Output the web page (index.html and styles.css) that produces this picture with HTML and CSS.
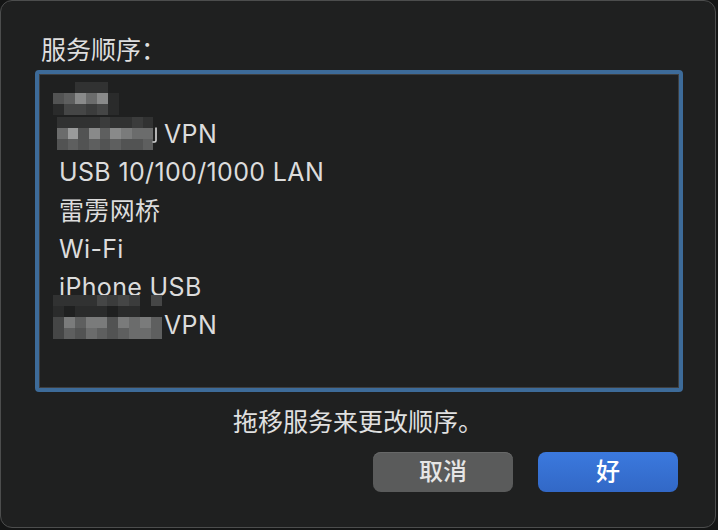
FILE: index.html
```html
<!DOCTYPE html>
<html lang="zh">
<head>
<meta charset="utf-8">
<link rel="stylesheet" href="styles.css">
</head>
<body>
<div class="window">
  <div class="title">服务顺序：</div>
  <div class="list">
    <div class="item"><div class="mosaic mA">
        <span></span><span></span><span class="g2"></span><span class="g2"></span><span class="g2"></span><span></span>
        <span class="g5"></span><span class="g6"></span><span class="g9"></span><span class="g7"></span><span class="g9"></span><span class="g1"></span>
        <span class="g1"></span><span class="g4"></span><span class="g4"></span><span class="g3"></span><span class="g4"></span><span class="g1"></span>
      </div><span class="tail">&nbsp;</span></div>
    <div class="item"><div class="mosaic mB">
        <span class="g2"></span><span class="g2"></span><span class="g2"></span><span class="g2"></span><span class="g3"></span><span class="g2"></span><span class="g2"></span><span class="g3"></span><span class="g2"></span>
        <span class="g7"></span><span class="ga"></span><span class="g5"></span><span class="g9"></span><span class="g6"></span><span class="g9"></span><span class="g8"></span><span class="g7"></span><span class="g7"></span>
        <span class="g5"></span><span class="g6"></span><span class="g5"></span><span class="g6"></span><span class="g5"></span><span class="g6"></span><span class="g5"></span><span class="g5"></span><span class="g6"></span>
      </div><svg class="sliver" width="6" height="16" viewBox="0 0 6 16"><path d="M4 0.5 V13.5 Q4 15 2.5 15 H0.5" fill="none" stroke="#d8d8d8" stroke-width="1.6"/></svg><span class="tail">VPN</span></div>
    <div class="item">USB 10/100/1000 LAN</div>
    <div class="item">雷雳网桥</div>
    <div class="item">Wi-Fi</div>
    <div class="item">iPhone USB</div>
    <div class="item"><div class="mosaic mC">
        <span class="g2"></span><span class="g2"></span><span class="g2"></span><span class="g2"></span><span class="g4"></span><span class="g3"></span><span class="g4"></span><span class="g3"></span><span></span><span class="g4"></span>
        <span class="g1"></span><span></span><span class="g1"></span><span class="g1"></span><span class="g1"></span><span></span><span class="g1"></span><span class="g1"></span><span></span><span></span>
        <span class="g4"></span><span class="g8"></span><span class="g6"></span><span class="g8"></span><span class="g8"></span><span class="g5"></span><span class="g8"></span><span class="g7"></span><span class="g8"></span><span class="g6"></span>
        <span class="g4"></span><span class="g6"></span><span class="g5"></span><span class="g7"></span><span class="g6"></span><span class="g5"></span><span class="g6"></span><span class="g7"></span><span class="g7"></span><span class="g6"></span>
      </div><span class="tail">VPN</span></div>
  </div>
  <div class="hint">拖移服务来更改顺序。</div>
  <div class="buttons">
    <button class="btn cancel">取消</button>
    <button class="btn ok">好</button>
  </div>
</div>
</body>
</html>
```

FILE: styles.css
```css
html, body {
  margin: 0;
  padding: 0;
  background: #141515;
}
body {
  width: 718px;
  height: 530px;
  font-family: "Inter", "Noto Sans CJK SC", sans-serif;
  color: #dcdcdc;
}
.window {
  box-sizing: border-box;
  width: 716px;
  height: 528px;
  background: #1f2020;
  border: 1px solid #4c4d4d;
  border-radius: 12px;
  padding: 34px 0 0 34px;
  display: flex;
  flex-direction: column;
}
.title {
  font-size: 25px;
  line-height: 30px;
  height: 30px;
  padding-left: 6px;
  margin-bottom: 5px;
  color: #dedede;
}
.list {
  box-sizing: border-box;
  width: 648px;
  height: 322px;
  border: 4px solid #3d6b99;
  border-radius: 4px;
  box-shadow: inset 0 0 0 1px #3e3f40;
  padding: 3px 0 0 20px;
}
.item {
  position: relative;
  font-size: 25px;
  letter-spacing: 0.35px;
  line-height: 38.2px;
  height: 38.2px;
  white-space: nowrap;
  color: #dcdcdc;
}
.mosaic {
  position: absolute;
  display: grid;
  grid-auto-rows: 11px;
}
.mosaic span { display: block; }
.mA {
  left: -6px;
  top: 5px;
  grid-template-columns: repeat(6, 11px);
}
.mB {
  left: -2px;
  top: 2px;
  grid-template-columns: repeat(9, 10.7px);
}
.mC {
  left: -6px;
  top: -11px;
  grid-template-columns: repeat(10, 10.9px);
}
.sliver {
  position: absolute;
  left: 93px;
  top: 12px;
}
.tail {
  margin-left: 105px;
}
.g1 { background: #2a2b2b; }
.g2 { background: #313232; }
.g3 { background: #3b3c3c; }
.g4 { background: #454646; }
.g5 { background: #525353; }
.g6 { background: #5e5f5f; }
.g7 { background: #6b6c6c; }
.g8 { background: #7a7b7b; }
.g9 { background: #898a8a; }
.ga { background: #9a9b9b; }
.hint {
  font-size: 25px;
  line-height: 30px;
  margin: 15px 34px 0 0;
  text-align: center;
  color: #e0e0e0;
}
.buttons {
  display: flex;
  justify-content: flex-end;
  gap: 25px;
  margin-top: 15px;
  padding-right: 37px;
}
.btn {
  width: 140px;
  height: 40px;
  border: none;
  border-radius: 8px;
  font-family: "Inter", "Noto Sans CJK SC", sans-serif;
  font-size: 24px;
  font-weight: 500;
  line-height: 40px;
  padding: 0;
  color: #e6e6e6;
}
.cancel {
  background: #5a5b5b;
  box-shadow: inset 0 1px 0 #676868;
}
.ok {
  background: linear-gradient(#3b79de, #3268c6);
  color: #ffffff;
}
```
